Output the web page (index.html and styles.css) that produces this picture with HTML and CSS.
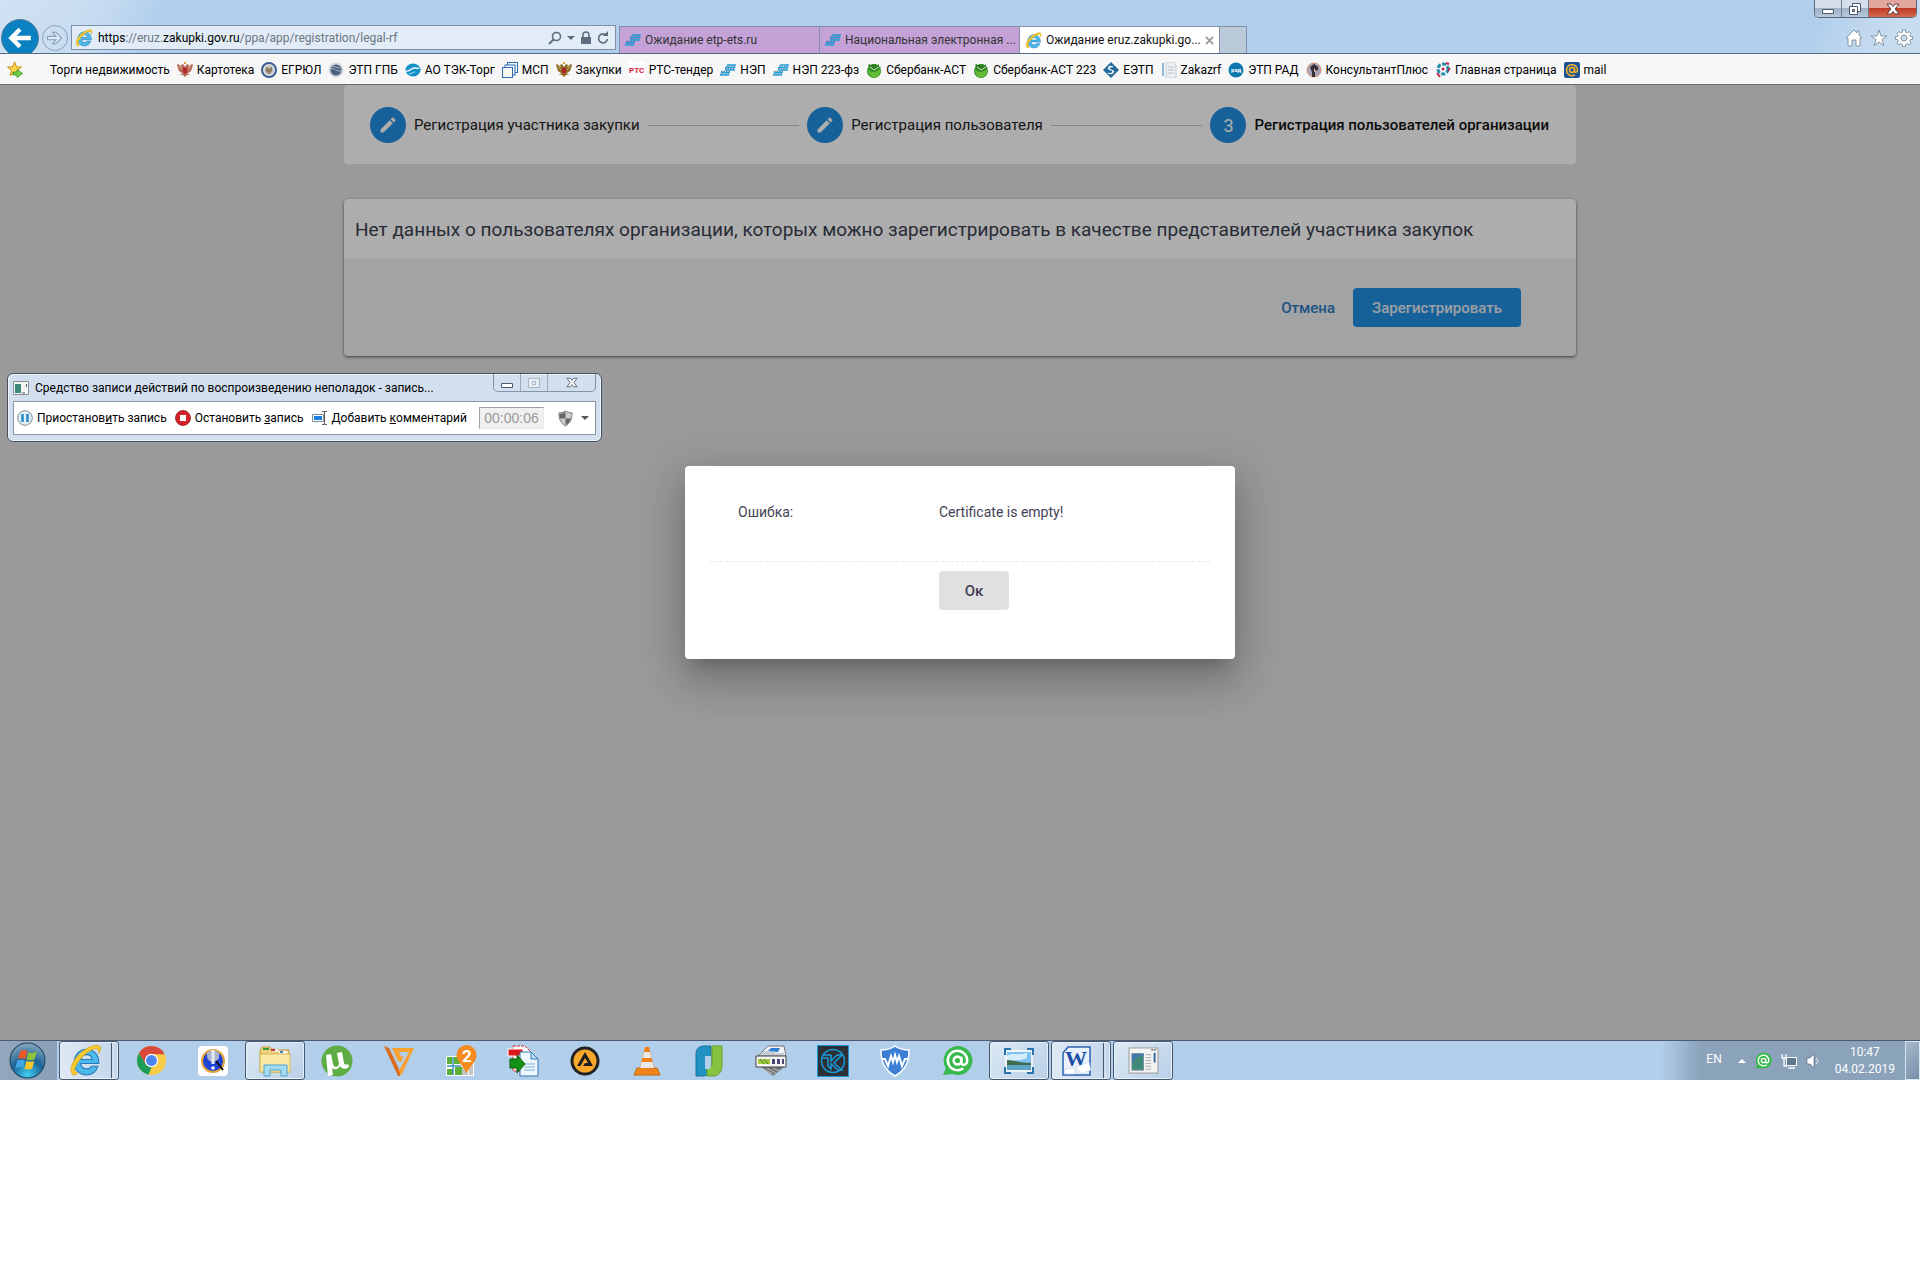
FILE: index.html
```html
<!DOCTYPE html>
<html lang="ru">

<head>
  <meta charset="UTF-8">
  <meta name="viewport" content="width=device-width, initial-scale=1.0">
  <title>Регистрация пользователей организации</title>
  <link rel="stylesheet" href="styles.css">
</head>

<body>
  <!-- Shared icons -->
  <svg class="sprite" aria-hidden="true">
    <symbol id="ie" viewBox="0 0 32 32">
      <path d="M29 19H11.500c.4 3.200 2.500 5 5.500 5 2.300 0 4-.9 5-2.500h6C26.500 27 22 30 17 30 10 30 5 25 5 18S10 5 17 5s12 5 12 14zM11.700 15h10.700c-.4-3-2.400-4.700-5.300-4.700-3 0-4.900 1.700-5.400 4.700z" fill="#4db8ea" stroke="#2478b8" stroke-width="1" />
      <path d="M4 30C-2 25 6 10 18 4c6-3 12-4 12.500 0 .2 1.500-.5 3.500-1.500 5 .3-3-1-5-4-4.500C16 7 7 18 5.500 24c-.4 2.500.5 4 3 4-2 1.500-3.500 2.500-4.500 2z" fill="#f7cb2d" stroke="#d9a416" stroke-width=".8" />
    </symbol>
    <symbol id="nep" viewBox="0 0 16 16">
      <path d="M7 3h9M5 5.500h10.500M5 8h10M1 10.500h9M0 13h9" stroke="#1fa3dc" stroke-width="1.500" />
      <path d="M6 4.200h9M5 6.700h10M1 9.300h10M0 11.800h10" stroke="#2a5f94" stroke-width=".8" stroke-dasharray="1.500 1" />
    </symbol>
    <symbol id="sber" viewBox="0 0 16 16">
      <circle cx="8" cy="9" r="7" fill="#2f8f22" />
      <path d="M2 7c3 4 7 4 12 0 1 5-2 8-5 8.500-4 .5-7-3-7-8.500z" fill="#63bb35" />
      <path d="M2 3l1.500-1 1.500 1.500L6.500 2 8 4l2-2.500L11 4l2-2v3l2 0-3 3-4 1-4-2z" fill="#2c7d24" />
      <path d="M4 5l4 3 5-3" fill="none" stroke="#d8efbc" stroke-width="1" />
    </symbol>
    <symbol id="pencil" viewBox="0 0 24 24">
      <path d="M3 17.250V21h3.750L17.810 9.940l-3.750-3.750L3 17.250zM20.710 7.040a1 1 0 0 0 0-1.410l-2.340-2.340a1 1 0 0 0-1.410 0l-1.830 1.830 3.750 3.750 1.830-1.830z" fill="#fff" />
    </symbol>
    <symbol id="eagle" viewBox="0 0 16 16">
      <path d="M8 5L6 2 4 3l1 2-4-3-1 1 2 6 3 2-2 2 3 0 2 2 2-2h3l-2-2 3-2 2-6-1-1-4 3 1-2-2-1z" fill="currentColor" />
      <path d="M2 4l3 4M14 4l-3 4M4 13l2-2M12 13l-2-2" stroke="#e7d2b8" stroke-width=".7" />
      <path d="M6 6h4v4l-2 2-2-2z" fill="#b3232a" />
      <path d="M7 0h2v2H7z" fill="#d7a438" />
    </symbol>
    <symbol id="agent" viewBox="0 0 32 32">
      <path d="M16 1a15 15 0 1 1-5 29L1 31l3-7A15 15 0 0 1 16 1z" fill="#37b94b" />
      <circle cx="16" cy="16" r="4" fill="none" stroke="#fff" stroke-width="2.600" />
      <path d="M20 12v6c0 4 6 3 6-2a10 10 0 1 0-4 8" fill="none" stroke="#fff" stroke-width="2.600" />
    </symbol>
    <symbol id="appwin" viewBox="0 0 32 28">
      <rect x="1" y="1" width="30" height="26" fill="#f4f4f2" stroke="#999" />
      <path d="M24 3h2m1 0h2" stroke="#555" stroke-width="1.500" />
      <rect x="4" y="7" width="12" height="17" fill="#3e8a78" stroke="#7a8f9c" />
      <path d="M4 17C6 12 11 9 16 9V7H4z" fill="#4578a8" />
      <path d="M18 8h6m-6 3h6m-6 3h6m-6 3h6m-6 3h6m-6 3h6" stroke="#aaa" />
      <path d="M27.500 6v10" stroke="#2f6a9c" stroke-width="2" />
    </symbol>
  </svg>

  <div class="desktop">
    <header class="browser">
      <button class="back" aria-label="Назад">
        <svg viewBox="0 0 24 24" width="26" height="26"><path d="M22 12H5M12 4l-8 8 8 8" fill="none" stroke="#fff" stroke-width="4" /></svg>
      </button>
      <button class="forward" aria-label="Вперед">
        <svg viewBox="0 0 24 24" width="20" height="20"><path d="M3 10h10l-4-5h4l7 7-7 7H9l4-5H3z" fill="#dbe8f5" stroke="#8ba1b8" stroke-width="1.300" /></svg>
      </button>
      <div class="address">
        <svg width="18" height="18"><use href="#ie" /></svg>
        <span class="url" role="textbox" aria-label="Адрес" contenteditable="true" spellcheck="false"><b>https</b>://eruz.<b>zakupki.gov.ru</b>/ppa/app/registration/legal-rf</span>
        <svg viewBox="0 0 14 14" width="14" height="14"><circle cx="8.500" cy="5.500" r="4" fill="none" stroke="#5e6d7d" stroke-width="1.600" /><path d="M5.500 8.500L1 13" stroke="#5e6d7d" stroke-width="2" /></svg>
        <svg viewBox="0 0 8 6" width="8" height="6"><path d="M0 1h8L4 5z" fill="#5e6d7d" /></svg>
        <svg viewBox="0 0 12 14" width="12" height="14"><path d="M1 6h10v7H1z" fill="#5e6d7d" /><path d="M3 7V4a3 3 0 0 1 6 0v3" fill="none" stroke="#5e6d7d" stroke-width="1.600" /></svg>
        <svg viewBox="0 0 12 14" width="12" height="14"><path d="M9.500 4.500A4.500 4.500 0 1 0 10.500 8" fill="none" stroke="#5e6d7d" stroke-width="1.700" /><path d="M6 5h5V0z" fill="#5e6d7d" /></svg>
      </div>
      <nav class="tabs">
        <button class="tab"><svg width="16" height="16"><use href="#nep" /></svg><span>Ожидание etp-ets.ru</span></button>
        <button class="tab"><svg width="16" height="16"><use href="#nep" /></svg><span>Национальная электронная ...</span></button>
        <button class="tab active"><svg width="17" height="17"><use href="#ie" /></svg><span>Ожидание eruz.zakupki.go...</span>
          <svg class="tab-close" viewBox="0 0 10 10" width="9" height="9"><path d="M1 1l8 8M9 1L1 9" stroke="#999" stroke-width="2" /></svg>
        </button>
        <button class="new-tab" aria-label="Новая вкладка"></button>
      </nav>
      <div class="browser-right">
        <div class="window-buttons">
          <button class="wb" aria-label="Свернуть"><svg viewBox="0 0 14 14" width="14" height="14"><path d="M1.500 7.500h11v4h-11z" fill="#fff" stroke="#4d5a6b" /></svg></button>
          <button class="wb" aria-label="Восстановить"><svg viewBox="0 0 14 14" width="14" height="14"><path d="M4.500 1.500h8v8h-8z" fill="#fff" stroke="#4d5a6b" /><path d="M1.500 4.500h8v8h-8z" fill="#fff" stroke="#4d5a6b" /><path d="M4.500 7.500h2v2h-2z" fill="#8e9db0" stroke="#4d5a6b" /></svg></button>
          <button class="wb wb-close" aria-label="Закрыть"><svg viewBox="0 0 14 12" width="14" height="12"><path d="M1 1h4l2 2.500L9 1h4L9.200 6l3.800 5H9L7 8.500 5 11H1l3.800-5z" fill="#fff" stroke="#5d3a3f" /></svg></button>
        </div>
        <div class="tools">
          <svg viewBox="0 0 18 18" width="18" height="18"><path d="M9 1L1 9h2v8h4v-6h4v6h4V9h2l-3-3V2h-2v2z" fill="#fff" stroke="#8794a3" /></svg>
          <svg viewBox="0 0 18 18" width="18" height="18"><path d="M9 1l2 6h6l-5 3.500 2 6L9 13l-5 3.500 2-6L1 7h6z" fill="#fff" stroke="#8794a3" /></svg>
          <svg viewBox="0 0 18 18" width="18" height="18"><path d="M7.500 1h3v2l2 1 1.600-1.500 2 2L14.500 6l1 1.500h2v3h-2l-1 2 1.600 1.500-2 2-1.600-1.500-2 1v2h-3v-2l-2-1L3.900 16l-2-2 1.600-1.500-1-2h-2v-3h2l1-1.500-1.600-1.500 2-2L5.500 4l2-1z" fill="#fff" stroke="#8794a3" /><circle cx="9" cy="9" r="3" fill="#c4daef" stroke="#8794a3" /></svg>
        </div>
      </div>
    </header>

    <nav class="bookmarks">
      <svg viewBox="0 0 16 16" width="16" height="16"><path d="M7.500 0l2 5h5l-4 3.500 1.500 5-4.500-3-4.500 3 1.500-5L.5 5h5z" fill="#ffd64a" stroke="#c98f14" /><path d="M6 10h4V7.500l5.500 4-5.500 4V13H6z" fill="#6fd043" stroke="#2e8c1d" stroke-width=".8" /></svg>
      <a href="#"><i class="blank"></i>Торги недвижимость</a>
      <a href="#"><svg class="red-eagle" width="16" height="16"><use href="#eagle" /></svg>Картотека</a>
      <a href="#"><svg viewBox="0 0 16 16" width="16" height="16"><circle cx="8" cy="8" r="7" fill="#e8e3da" stroke="#3a5e96" stroke-width="2" /><circle cx="8" cy="8" r="4.500" fill="#b4b9c2" /><path d="M5 5l3 2 3-2v4l-3 3-3-3z" fill="#8f7b5a" /></svg>ЕГРЮЛ</a>
      <a href="#"><svg viewBox="0 0 16 16" width="16" height="16"><circle cx="8" cy="8" r="7.500" fill="#d4d8de" /><circle cx="8" cy="8" r="5.500" fill="#4d6079" /><path d="M3 7c3-2 6 3 10 2M4 4c3 0 5 2 8 2" stroke="#aebccc" fill="none" /></svg>ЭТП ГПБ</a>
      <a href="#"><svg viewBox="0 0 16 16" width="16" height="16"><ellipse cx="8" cy="8" rx="7.500" ry="6.500" fill="#1390c8" /><path d="M1 9c4 1 5-3 8-3s3 1 5 0" fill="none" stroke="#fff" stroke-width="1.400" /><path d="M4 12c3 0 3-2 6-2" fill="none" stroke="#bfe4f5" /></svg>АО ТЭК-Торг</a>
      <a href="#"><svg viewBox="0 0 16 16" width="16" height="16" fill="#f7f7f8" stroke="#2b6cb5" stroke-width="1"><rect x="5.500" y=".5" width="10" height="10" /><rect x="3" y="3" width="10" height="10" /><rect x=".5" y="5.500" width="10" height="10" /></svg>МСП</a>
      <a href="#"><svg class="gold-eagle" width="16" height="16"><use href="#eagle" /></svg>Закупки</a>
      <a href="#"><svg viewBox="0 0 16 16" width="16" height="16"><rect width="16" height="16" fill="#fff" /><text x="0" y="11" class="rts">РТС</text></svg>РТС-тендер</a>
      <a href="#"><svg width="16" height="16"><use href="#nep" /></svg>НЭП</a>
      <a href="#"><svg width="16" height="16"><use href="#nep" /></svg>НЭП 223-фз</a>
      <a href="#"><svg width="16" height="16"><use href="#sber" /></svg>Сбербанк-АСТ</a>
      <a href="#"><svg width="16" height="16"><use href="#sber" /></svg>Сбербанк-АСТ 223</a>
      <a href="#"><svg viewBox="0 0 16 16" width="16" height="16"><path d="M8 0l3 3 2 2 3 3-3 3-2 2-3 3-3-3-2-2-3-3 3-3 2-2z" fill="#256a9e" /><path d="M10 5C6 3 4 7 8 8s2 5-3 3M5 7l3-3M8 12l3-3" fill="none" stroke="#fff" stroke-width="1.200" /></svg>ЕЭТП</a>
      <a href="#"><svg viewBox="0 0 16 16" width="16" height="16"><path d="M1 1h2v13H1z" fill="#8fb9da" /><path d="M5 0h7l3 3v13H5z" fill="#edf1f5" stroke="#c2cbd3" /><path d="M7 5h6M7 8h6M7 11h6" stroke="#b9c3cc" /></svg>Zakazrf</a>
      <a href="#"><svg viewBox="0 0 16 16" width="16" height="16"><circle cx="8" cy="8" r="7.500" fill="#0c76ae" /><text x="3" y="10" class="rad">рад</text></svg>ЭТП РАД</a>
      <a href="#"><svg viewBox="0 0 16 16" width="16" height="16"><circle cx="8" cy="8" r="7" fill="#a9a3bc" stroke="#d9926c" /><path d="M4 5l4-3 4 3v3l-3 1v6H6v-5z" fill="#36303a" /><path d="M8 6l2 3-2 1z" fill="#e2c1a6" /></svg>КонсультантПлюс</a>
      <a href="#"><svg viewBox="0 0 16 16" width="16" height="16"><circle cx="8" cy="7" r="5" fill="none" stroke="#218fa8" stroke-width="3" stroke-dasharray="4 1.500" /><circle cx="8" cy="7" r="1.500" fill="#c2264d" /><path d="M11 1l3 1M2 11l3 4M13 9l2-3" stroke="#c2264d" stroke-width="2" /></svg>Главная страница</a>
      <a href="#"><svg viewBox="0 0 16 16" width="16" height="16"><rect width="16" height="16" rx="2" fill="#1d5594" /><circle cx="8" cy="8" r="2.500" fill="none" stroke="#f7b42a" stroke-width="1.500" /><path d="M10.500 5.500V9c0 2 3 1.500 3-1A5.500 5.500 0 1 0 11 12.800" fill="none" stroke="#f7b42a" stroke-width="1.500" /></svg>mail</a>
    </nav>

    <main class="page">
      <div class="content">
        <section class="card steps">
          <span class="circle"><svg width="20" height="20"><use href="#pencil" /></svg></span>
          <span class="step-label">Регистрация участника закупки</span>
          <span class="step-line"></span>
          <span class="circle"><svg width="20" height="20"><use href="#pencil" /></svg></span>
          <span class="step-label">Регистрация пользователя</span>
          <span class="step-line"></span>
          <span class="circle">3</span>
          <span class="step-label current">Регистрация пользователей организации</span>
        </section>

        <section class="card users">
          <h1>Нет данных о пользователях организации, которых можно зарегистрировать в качестве представителей участника закупок</h1>
          <div class="actions">
            <button class="cancel">Отмена</button>
            <button class="submit">Зарегистрировать</button>
          </div>
        </section>
      </div>

      <div class="overlay">
        <div class="modal" role="dialog" aria-label="Ошибка">
          <div class="modal-row">
            <span>Ошибка:</span>
            <span>Certificate is empty!</span>
          </div>
          <div class="modal-actions">
            <button class="ok">Ок</button>
          </div>
        </div>
      </div>

      <div class="recorder">
        <div class="recorder-title">
          <svg viewBox="0 0 16 14" width="16" height="14"><path d="M.5.500h15v13H.5z" fill="#f4f4f2" stroke="#8a8f94" /><path d="M2 3h6v9H2z" fill="#3e8a78" /><path d="M9 12h3M13.500 3v3" stroke="#4a5a6a" /></svg>
          <span>Средство записи действий по воспроизведению неполадок - запись...</span>
          <div class="recorder-buttons">
            <button aria-label="Свернуть"><svg viewBox="0 0 14 14" width="14" height="14"><path d="M1.500 7.500h11v4h-11z" fill="#fff" stroke="#4d5a6b" /></svg></button>
            <button aria-label="Развернуть"><svg viewBox="0 0 14 14" width="14" height="14"><path d="M1.500 2.500h11v9h-11zM5.500 5.500h3v3h-3z" fill="#e8eef5" stroke="#a9b5c3" /></svg></button>
            <button class="wide" aria-label="Закрыть"><svg viewBox="0 0 14 12" width="12" height="11"><path d="M1 1h4l2 2.500L9 1h4L9.200 6l3.800 5H9L7 8.500 5 11H1l3.800-5z" fill="#fff" stroke="#4d5a6b" /></svg></button>
          </div>
        </div>
        <div class="recorder-bar">
          <button><svg viewBox="0 0 16 16" width="16" height="16"><circle cx="8" cy="8" r="7.300" fill="#e4f0f8" stroke="#7f8b96" /><path d="M5.500 4v8M10.500 4v8" stroke="#2b8ccb" stroke-width="2.600" /></svg>Приостанов<u>и</u>ть запись</button>
          <button><svg viewBox="0 0 16 16" width="16" height="16"><circle cx="8" cy="8" r="7.500" fill="#d3222a" stroke="#96171c" stroke-width=".8" /><path d="M5 5h6v6H5z" fill="#fff" /></svg>Остановить <u>з</u>апись</button>
          <button><svg viewBox="0 0 16 16" width="16" height="16"><path d="M.5 4.500h11v7H.5z" fill="#fff" stroke="#7d8ea0" /><path d="M2 6h8v4H2z" fill="#1a7fe0" /><path d="M10 1.500h5M10 14.500h5M12.500 2v12" stroke="#666" stroke-width="1.200" /></svg>Добавить <u>к</u>омментарий</button>
          <input class="timer" type="text" value="00:00:06" aria-label="Время записи" disabled>
          <svg viewBox="0 0 16 18" width="15" height="17"><path d="M8 1c2 1 4 2 7 2 0 7-2 11-7 14C3 14 1 10 1 3c3 0 5-1 7-2z" fill="#ccc" stroke="#777" /><path d="M8 2v7H2C2 7 1 5 2 4c2 0 4-1 6-2zM8 9h6c-1 3-3 5-6 7z" fill="#666" /></svg>
          <svg viewBox="0 0 8 6" width="8" height="6"><path d="M0 1h8L4 5z" fill="#555" /></svg>
        </div>
      </div>
    </main>

    <footer class="taskbar">
      <button class="start" aria-label="Пуск">
        <svg viewBox="0 0 36 36" width="37" height="37">
          <defs><radialGradient id="orb" cx=".5" cy=".9" r=".9"><stop offset="0" stop-color="#3fd0f2" /><stop offset=".5" stop-color="#1c6296" /><stop offset="1" stop-color="#8aa9be" /></radialGradient></defs>
          <circle cx="18" cy="18" r="17" fill="url(#orb)" stroke="#20425e" />
          <path d="M11 9c3-2 5-1 7 0l-2 7.500c-3-1-5-1-7.500 0z" fill="#e8592b" /><path d="M19 10c3 1 5 1 8-1l-2 8c-3 1-5 1-8 0z" fill="#8cc53c" /><path d="M8 18c3-1 5-1 7.500 0l-2 7c-3-1-5-1-7.500 1z" fill="#42a5e6" /><path d="M17 18.500c3 1 5 1 7.500 0l-2 7.500c-3 1-5 1-7.500 0z" fill="#fbc52c" />
        </svg>
      </button>
      <button class="task open stacked" aria-label="Internet Explorer"><svg width="33" height="33"><use href="#ie" /></svg></button>
      <button class="task" aria-label="Chrome"><svg viewBox="0 0 32 32" width="31" height="31"><circle cx="16" cy="16" r="15" fill="#f8cc47" /><path d="M3 8.500A15 15 0 0 1 29.500 9.500H16l-6.500 9.500z" fill="#d8483b" /><path d="M3 8.500l7 11 6 3.500-3 7.700A15 15 0 0 1 3 8.500z" fill="#1d9c5a" /><circle cx="16" cy="16" r="7" fill="#f5f5f5" /><circle cx="16" cy="16" r="5.600" fill="#4b86ee" /></svg></button>
      <button class="task" aria-label="Поиск"><svg viewBox="0 0 30 30" width="30" height="30"><rect width="30" height="30" rx="4" fill="#fff" /><circle cx="15" cy="15" r="11" fill="#1f45d8" stroke="#e0a43a" stroke-width="2" /><path d="M9 7a8 8 0 0 1 12 0v5c-2 3-4 4-6 4s-5-1-6-5z" fill="#aab4cc" /><path d="M15 4v14" stroke="#e9edf6" stroke-width="3" /><circle cx="15" cy="22" r="1.800" fill="#fff" /><path d="M18 15l7 9" stroke="#111" stroke-width="2" /></svg></button>
      <button class="task open" aria-label="Проводник"><svg viewBox="0 0 34 32" width="34" height="32"><path d="M2 5l2-3h8l2 3h17v22H2z" fill="#edd27a" stroke="#c09c3f" /><path d="M5 3h6v2H5z" fill="#3c9c3c" /><path d="M13 4h8v3h-8z" fill="#fff" stroke="#c09c3f" stroke-width=".5" /><path d="M13 4h4v2h-4z" fill="#c53030" /><path d="M21 6h8v3h-8z" fill="#fff" /><path d="M22 6h3v2h-3z" fill="#3a83c8" /><path d="M2 9h30v18H2z" fill="#fae9a5" stroke="#d5b65a" /><path d="M6 31V20h23v11h-6v-6H12v6z" fill="#a6dcf3" stroke="#4ea3cc" /></svg></button>
      <button class="task" aria-label="uTorrent"><svg viewBox="0 0 32 32" width="32" height="32"><circle cx="16" cy="16" r="15.500" fill="#5fae45" /><path d="M5 10l5-1 2 10c1 4 5 4 6 0L16 8l5-1 2 11c.5 2 2 2 4 1l1 3c-4 3-7 2-9-1-2 4-6 4-8 2l1 7-5 1z" fill="#fff" /></svg></button>
      <button class="task" aria-label="Freemake"><svg viewBox="0 0 32 32" width="32" height="32"><path d="M1 1l5 2 11 23v5h-2z" fill="#dd6b1d" /><path d="M9 3h22L18 31l-2-5L26 7H16l2 5 3-1-3 6-3-1-6-13z" fill="#f9a02f" /></svg></button>
      <button class="task" aria-label="2ГИС"><svg viewBox="0 0 32 32" width="32" height="32"><path d="M1 11h28v20H1z" fill="#fff" /><path d="M2 12h5v7H2zM2 24h6v6H2zM10 22h7v8h-7zM9 12h6v7H9z" fill="#5aaf35" /><path d="M8 12v18M2 21h14" stroke="#4293c3" stroke-width="1.500" /><path d="M18 22v8M20 24v6M22 25v5M25 23v7M27 20v10" stroke="#888" /><path d="M21.500 0a10 10 0 0 1 10 10c0 6-5 10-10 18-4-8-10-12-10-18a10 10 0 0 1 10-10z" fill="#f58a20" /><text x="17" y="17" class="gis">2</text></svg></button>
      <button class="task" aria-label="Документы"><svg viewBox="0 0 32 32" width="32" height="32"><path d="M6 1h12l5 5v20H6z" fill="#fff" stroke="#d22" stroke-dasharray="3 1" /><path d="M1 4h15v7H1z" fill="#e01515" stroke="#fff" /><path d="M13 7h11l7 7v17H13z" fill="#eef6fd" stroke="#3278b8" /><path d="M24 7v7h7z" fill="#c2dff4" stroke="#3278b8" /><path d="M17 19h11M17 22h11M17 25h11" stroke="#7db0d8" /><path d="M3 14h7v-4l8 9-8 9v-5H3z" fill="#159115" stroke="#0a5b0a" /></svg></button>
      <button class="task" aria-label="AIMP"><svg viewBox="0 0 30 30" width="30" height="30"><circle cx="15" cy="15" r="14.500" fill="#222" /><circle cx="15" cy="15" r="11.500" fill="#f9a72b" /><path d="M15 6l8 14h-10l2-3h3l-3-5-4.500 8H7z" fill="#1d1d1d" /></svg></button>
      <button class="task" aria-label="VLC"><svg viewBox="0 0 28 32" width="28" height="32"><path d="M4 23h20l3 7H1z" fill="#f2881c" stroke="#c4650b" /><path d="M12 2h4l6 24c-4 3-12 3-16 0z" fill="#f07f1a" /><path d="M11 7h6l1.500 6h-9zM8.500 17h11l1.500 6H7z" fill="#e8e8e8" /></svg></button>
      <button class="task" aria-label="PDF"><svg viewBox="0 0 28 32" width="28" height="32"><path d="M9 1h7v19c0 8-4 11-8 11H1V9c0-5 3-8 8-8z" fill="#2191c2" stroke="#187099" /><path d="M17 1h10v20c0 6-4 10-9 10h-6V21h5z" fill="#86c33f" stroke="#65a128" /><path d="M10 11h6v10c0 2-1 3-3 3h-3z" fill="#b1ceea" /></svg></button>
      <button class="task" aria-label="Устройство"><svg viewBox="0 0 32 32" width="32" height="32"><path d="M6 22l12 9 11-9z" fill="#777" /><path d="M8 24l10 5M12 23l9 5M18 23l6 3" stroke="#ccc" stroke-width=".8" /><path d="M3 11L13 1h16l2 10z" fill="#eef3f8" stroke="#777" /><path d="M16 3l9 0-2 4-10-1z" fill="#2f7ed2" /><path d="M5 9h24M8 7h12" stroke="#9aa7b5" /><path d="M1 11h30v11H1z" fill="#f4f4f4" stroke="#444" /><path d="M3 14h12v5H3z" fill="#a7c93f" /><path d="M5 14l4 5M9 14l4 5" stroke="#3e7d2d" /><path d="M17 14h3v5h-3zM22 14h3v5h-3zM27 14h2v5h-2z" fill="#4a4578" /></svg></button>
      <button class="task" aria-label="Контур"><svg viewBox="0 0 32 32" width="32" height="32"><rect x=".5" y=".5" width="31" height="31" fill="#2c3036" stroke="#1a98d5" /><circle cx="16" cy="16" r="11.500" fill="none" stroke="#1a98d5" stroke-width="1.500" /><path d="M6 10h8v6l6-6h5l-8 8 8 7h-4l-7-6v5l-3-3v-8H6" fill="none" stroke="#1a98d5" stroke-width="1.500" /></svg></button>
      <button class="task" aria-label="Защита"><svg viewBox="0 0 30 32" width="30" height="32"><path d="M15 1c4 3 8 4 14 4 0 13-4 20-14 26C5 25 1 18 1 5c6 0 10-1 14-4z" fill="#3b7fd4" stroke="#fff" stroke-width="1.500" /><path d="M2 14h3l3 7 3-10 2 6 2-7 2 7 2-6 3 10 3-7h3" fill="none" stroke="#fff" stroke-width="2" /></svg></button>
      <button class="task" aria-label="Агент"><svg width="31" height="31"><use href="#agent" /></svg></button>
      <button class="task open" aria-label="Просмотр изображений"><svg viewBox="0 0 30 26" width="30" height="26"><rect x="2" y="3" width="26" height="20" fill="#7cc1f2" stroke="#eef3f6" stroke-width="2" /><path d="M3 8c5-4 10 0 20-3v5c-6 3-14 2-20 3z" fill="#d6ecfa" /><path d="M3 12c6 0 14 3 24 3v2H3z" fill="#3f6d4b" /><path d="M3 17h24v5H3z" fill="#5fa3c4" /><path d="M1 7V1h6M23 1h6v6M29 19v6h-6M7 25H1v-6" fill="none" stroke="#2a74ae" stroke-width="2" /></svg></button>
      <button class="task open stacked" aria-label="Word"><svg viewBox="0 0 30 30" width="30" height="30"><path d="M6 1h22v28H1V7z" fill="#e9f2fc" stroke="#2a62b5" stroke-width="1.500" /><text x="3" y="20" class="word">W</text><path d="M14 21l13-5 2 8-10 4zM3 23l10-1v6H3z" fill="#fff" stroke="#b7c9e2" stroke-width=".6" /></svg></button>
      <button class="task open" aria-label="Средство записи действий"><svg width="31" height="27"><use href="#appwin" /></svg></button>

      <div class="tray">
        <span class="lang">EN</span>
        <svg viewBox="0 0 8 6" width="8" height="6"><path d="M0 5h8L4 1z" fill="#fff" /></svg>
        <svg width="17" height="17"><use href="#agent" /></svg>
        <svg viewBox="0 0 16 16" width="16" height="16"><path d="M5.500 4.500h10v8h-10z" fill="#5f7890" stroke="#fff" /><path d="M7 15h7M1 1v4h4V1M3 5v8h3" fill="none" stroke="#fff" stroke-width="1.300" /></svg>
        <svg viewBox="0 0 14 16" width="14" height="16"><path d="M1 5h3l4-4v14l-4-4H1z" fill="#fff" stroke="#4a5d72" stroke-width=".6" /><path d="M10 5c2 2 2 4 0 6" fill="none" stroke="#fff" /></svg>
        <time class="clock"><span>10:47</span><span>04.02.2019</span></time>
        <button class="show-desktop" aria-label="Показать рабочий стол"></button>
      </div>
    </footer>
  </div>
</body>

</html>
```

FILE: styles.css
```css
* {
  box-sizing: border-box;
}

body {
  margin: 0;
  background: #fff;
  font-family: Roboto, "Open Sans", sans-serif;
  font-size: 12px;
  color: #000;
}

button {
  margin: 0;
  padding: 0;
  border: none;
  background: none;
  font: inherit;
  color: inherit;
}

svg {
  flex: none;
  display: block;
}

.sprite {
  display: none;
}

.desktop {
  display: flex;
  flex-direction: column;
  height: calc(100vh - 182px);
}

/* Browser */
.browser {
  display: flex;
  align-items: flex-end;
  height: 54px;
  padding-left: 1px;
  overflow: hidden;
  background: linear-gradient(115deg, #d0e1f3 0, #c8dcf1 90px, #b1cfec 150px, #b1cfec 94%, #c8dcf0 98%);
  border-bottom: 1px solid #566b89;
}

.back {
  display: flex;
  align-items: center;
  justify-content: center;
  flex: none;
  width: 38px;
  height: 38px;
  margin-bottom: -4px;
  border: 1px solid #54799c;
  border-radius: 50%;
  background: #0a82c2;
}

.forward {
  display: flex;
  align-items: center;
  justify-content: center;
  flex: none;
  width: 26px;
  height: 26px;
  margin: 0 3px 2px;
  border: 1px solid #8ba1b8;
  border-radius: 50%;
}

.address {
  display: flex;
  align-items: center;
  flex: 0 1 545px;
  gap: 5px;
  height: 25px;
  margin-bottom: 3px;
  padding: 1px 6px 0 3px;
  border: 1px solid #7e91aa;
  background: #e1ecf7;
}

.url {
  flex: 1;
  color: #6c7680;
  white-space: nowrap;
  overflow: hidden;
}

.url b {
  font-weight: normal;
  color: #000;
}

.tabs {
  display: flex;
  flex: 0 1 628px;
  height: 27px;
  margin-left: 3px;
}

.tab {
  display: flex;
  align-items: center;
  flex: 1;
  gap: 4px;
  min-width: 0;
  padding: 0 6px 0 5px;
  border: 1px solid #8190a8;
  border-width: 1px 0 0 1px;
  background: #c4a1d6;
  color: #333;
  white-space: nowrap;
}

.tab.active {
  background: #fff;
  color: #111;
}

.tab-close {
  margin-left: auto;
}

.new-tab {
  width: 28px;
  border: 1px solid #8190a8;
  border-bottom: none;
  background: #bac9d7;
}

.browser-right {
  display: flex;
  flex-direction: column;
  align-items: flex-end;
  justify-content: space-between;
  align-self: stretch;
  margin-left: auto;
  padding-right: 3px;
}

.window-buttons {
  display: flex;
  height: 18px;
  border: 1px solid #58677c;
  border-top: none;
  border-radius: 0 0 5px 5px;
  overflow: hidden;
}

.wb {
  display: flex;
  align-items: center;
  justify-content: center;
  width: 27px;
  border-right: 1px solid #6e7d92;
  background: linear-gradient(#d4dfeb 45%, #9fb2c8 50%, #b6c9dd);
}

.wb-close {
  width: 47px;
  border-right: none;
  background: linear-gradient(#e1a79c 45%, #c03a25 50%, #d66a4c);
}

.tools {
  display: flex;
  gap: 7px;
  padding: 0 4px 6px 0;
}

.bookmarks {
  display: flex;
  align-items: center;
  gap: 7px;
  height: 31px;
  padding: 1px 0 0 7px;
  background: #f7f7f8;
  border-bottom: 1px solid #6d6d6d;
  white-space: nowrap;
}

.bookmarks a {
  display: flex;
  align-items: center;
  gap: 4px;
  color: #000;
  text-decoration: none;
}

.blank {
  width: 16px;
  height: 16px;
}

.red-eagle {
  color: #b5654f;
}

.gold-eagle {
  color: #8a6a1c;
}

.rts {
  font-size: 8px;
  font-weight: bold;
  fill: #d9202e;
}

.rad {
  font-size: 6px;
  font-weight: bold;
  fill: #fff;
}

/* Page */
.page {
  position: relative;
  flex: 1;
  background: #e3e3e3;
}

.content {
  max-width: 1232px;
  margin: 0 auto;
}

.card {
  border-radius: 4px;
  background: #fff;
}

.steps {
  display: flex;
  align-items: center;
  gap: 8px;
  padding: 22px 27px 21px 26px;
  font-size: 15px;
}

.circle {
  display: flex;
  align-items: center;
  justify-content: center;
  flex: none;
  width: 36px;
  height: 36px;
  border-radius: 50%;
  background: #2390e4;
  color: #fff;
  font-size: 18px;
}

.step-label {
  color: #222;
}

.step-label.current {
  font-weight: 500;
  color: #111;
}

.step-line {
  flex: 1;
  height: 1px;
  background: #c8c8c8;
}

.users {
  margin-top: 35px;
  overflow: hidden;
  box-shadow: 0 1px 3px rgba(0, 0, 0, 0.6);
}

.users h1 {
  margin: 0;
  padding: 19px 11px 17px;
  font-size: 19px;
  font-weight: normal;
  line-height: 24px;
  color: #3b3f51;
}

.actions {
  display: flex;
  justify-content: flex-end;
  gap: 18px;
  padding: 29px 55px;
  background: #eef0f3;
  font-size: 15px;
  font-weight: 500;
}

.cancel {
  color: #2c7bc0;
}

.submit {
  height: 39px;
  padding: 0 19px;
  border-radius: 4px;
  background: #2390e4;
  color: #e6ebf0;
}

.overlay {
  position: absolute;
  inset: 0;
  display: flex;
  align-items: center;
  justify-content: center;
  background: rgba(0, 0, 0, 0.32);
}

.modal {
  width: 550px;
  padding: 24px 25px 49px;
  border-radius: 4px;
  background: #fff;
  box-shadow: 0 11px 15px -7px rgba(0, 0, 0, 0.2), 0 24px 38px 3px rgba(0, 0, 0, 0.14), 0 9px 46px 8px rgba(0, 0, 0, 0.12);
  color: #3f4254;
}

.modal-row,
.modal-actions {
  display: grid;
  grid-template-columns: 201px 1fr;
  padding-left: 28px;
}

.modal-row {
  height: 72px;
  padding-top: 12px;
  border-bottom: 1px dashed #e6e7f0;
  font-size: 14px;
  line-height: 20px;
}

.modal-actions {
  padding-top: 9px;
}

.ok {
  grid-column: 2;
  justify-self: start;
  width: 70px;
  height: 39px;
  border-radius: 4px;
  background: #e0e0e0;
  font-size: 15px;
  font-weight: 500;
}

/* Steps recorder window */
.recorder {
  position: absolute;
  left: 7px;
  top: 288px;
  width: 595px;
  padding: 0 5px 6px;
  border: 1px solid #46525f;
  border-radius: 6px;
  background: #d2dfee;
  box-shadow: inset 0 0 0 1px #eef4fa;
}

.recorder-title {
  display: flex;
  align-items: center;
  gap: 6px;
  height: 27px;
}

.recorder-buttons {
  display: flex;
  align-self: flex-start;
  height: 18px;
  margin-left: auto;
  border: 1px solid #8593a5;
  border-top: none;
  border-radius: 0 0 5px 5px;
}

.recorder-buttons button {
  display: flex;
  align-items: center;
  justify-content: center;
  width: 27px;
  border-right: 1px solid #9ba8b8;
}

.recorder-buttons .wide {
  width: 47px;
  border-right: none;
}

.recorder-bar {
  display: flex;
  align-items: center;
  gap: 8px;
  height: 34px;
  padding: 0 6px 0 3px;
  border: 1px solid #8a96a3;
  background: #fff;
}

.recorder-bar button {
  display: flex;
  align-items: center;
  white-space: pre;
}

.recorder-bar button svg {
  margin-right: 4px;
}

.timer {
  width: 65px;
  height: 22px;
  margin: 0 6px 0 auto;
  padding: 0;
  border: 1px solid #a0a0a0;
  border-color: #a0a0a0 #e8e8e8 #e8e8e8 #a0a0a0;
  background: #f0f0f0;
  color: #999;
  font-family: "Liberation Sans", sans-serif;
  font-size: 14px;
  text-align: center;
}

/* Taskbar */
.taskbar {
  display: flex;
  align-items: stretch;
  gap: 2px;
  height: 40px;
  border-top: 1px solid #4d5a73;
  background: #b1ceea;
}

.start {
  display: flex;
  align-items: center;
  justify-content: center;
  width: 57px;
  padding-right: 3px;
  background: linear-gradient(90deg, #93a6bb, #8aa1b9);
}

.task {
  display: flex;
  align-items: center;
  justify-content: center;
  width: 60px;
}

.open {
  border: 1px solid #46566b;
  border-radius: 3px;
  background: linear-gradient(135deg, #dde9f5, #b9d0e8);
  box-shadow: inset 0 0 0 1px #e6f0fa;
}

.stacked {
  padding-right: 8px;
  background: linear-gradient(90deg, #dfe9f4 0, #c6d8ec 51px, #46566b 51px, #46566b 52px, #d4e3f2 52px, #b9d0e8);
}

.gis {
  font-size: 17px;
  font-weight: bold;
  fill: #fff;
}

.word {
  font-family: "Liberation Serif", serif;
  font-size: 22px;
  font-weight: bold;
  fill: #1a4fa5;
}

.tray {
  display: flex;
  align-items: center;
  gap: 9px;
  margin-left: auto;
  padding-left: 45px;
  background: linear-gradient(90deg, #b1ceea 0, #8aa2ba 40px);
  color: #fff;
}

.lang {
  margin-right: 7px;
  padding-bottom: 4px;
}

.clock {
  display: flex;
  flex-direction: column;
  align-items: center;
  margin: 0 1px 0 6px;
  line-height: 17px;
}

.show-desktop {
  align-self: stretch;
  width: 15px;
  border: 1px solid #dbe5ee;
  background: linear-gradient(135deg, #a7b9cb, #7690a9);
}
```
